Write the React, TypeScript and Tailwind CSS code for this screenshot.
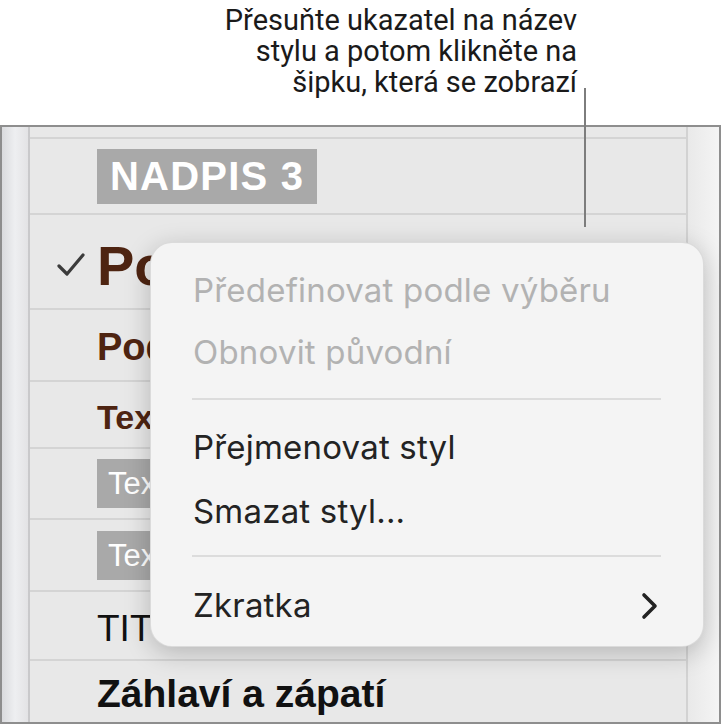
import React from 'react';

type Row = {
  label: string;
  h: string;
  checked?: boolean;
  boxed?: boolean;
  className: string;
};

const ROWS: Row[] = [
  { label: 'NADPIS 3', h: 'h-[76px]', boxed: true, className: 'text-[40px] font-bold text-white tracking-[1.2px] px-[13px] h-[55px]' },
  { label: 'Podnadpis', h: 'h-[95px]', checked: true, className: 'text-[56px] font-bold text-[#4e2411] pt-[8px]' },
  { label: 'Podnadpis 2', h: 'h-[72px]', className: 'text-[38px] font-bold text-[#4e2411] pt-[4px]' },
  { label: 'Text', h: 'h-[67px]', className: 'text-[34px] font-bold text-[#4e2411] pt-[4px]' },
  { label: 'Text s odrážkami', h: 'h-[71px]', boxed: true, className: 'text-[31px] text-white px-[11px] h-[49px]' },
  { label: 'Text s čísly', h: 'h-[72px]', boxed: true, className: 'text-[31px] text-white px-[11px] h-[49px]' },
  { label: 'TITULEK', h: 'h-[69px]', className: 'text-[37px] text-[#111] pt-[6px]' },
];

function Check() {
  return (
    <svg width="28" height="24" viewBox="0 0 28 24" fill="none">
      <path d="M2 13 L10 21 L26 2" stroke="#3b3b3b" strokeWidth="3.2" strokeLinecap="round" strokeLinejoin="round" />
    </svg>
  );
}

function StyleRow({ row }: { row: Row }) {
  return (
    <div className={`${row.h} shrink-0 flex items-center border-b-2 border-[#d4d4d4] pl-[27px] whitespace-nowrap overflow-hidden`}>
      <div className="w-[40px] shrink-0 flex items-center pt-[6px]">{row.checked && <Check />}</div>
      {row.boxed ? (
        <span className={`flex items-center bg-[#a9a9a9] leading-none ${row.className}`}>{row.label}</span>
      ) : (
        <span className={`leading-none ${row.className}`}>{row.label}</span>
      )}
    </div>
  );
}

function MenuItem({ label, disabled, h, submenu }: { label: string; disabled?: boolean; h: string; submenu?: boolean }) {
  return (
    <div className={`${h} flex items-center justify-between pl-[42px] pr-[45px]`}>
      <span className={disabled ? 'text-[#b2b2b2]' : 'text-[#232323]'}>{label}</span>
      {submenu && (
        <svg width="17" height="28" viewBox="0 0 17 28" fill="none">
          <path d="M3 3 L14 14 L3 25" stroke="#222" strokeWidth="3.6" strokeLinecap="round" strokeLinejoin="round" />
        </svg>
      )}
    </div>
  );
}

function Separator({ className }: { className: string }) {
  return <div className={`h-[2px] bg-[#dcdcdc] ml-[41px] mr-[42px] ${className}`} />;
}

export default function App() {
  return (
    <div className="relative w-[721px] h-[726px] bg-white overflow-hidden font-['Liberation_Sans',Arial,sans-serif]">
      {/* callout */}
      <div className="h-[125px] pt-[5px] pr-[144px] text-right text-[29px] leading-[31px] text-[#1a1a1a] font-['Roboto',sans-serif]">
        <p>Přesuňte ukazatel na název</p>
        <p>stylu a potom klikněte na</p>
        <p>šipku, která se zobrazí</p>
      </div>

      {/* styles pane */}
      <div className="h-[599px] border-2 border-[#8e8e8e] flex">
        <div className="w-[28px] shrink-0 border-r-2 border-[#c9c9cb] bg-gradient-to-r from-[#dadbde] via-[#eeeff1] to-[#e3e3e5]" />
        <div className="w-[656px] shrink-0 bg-[#e8e8e8] flex flex-col">
          <div className="h-[12px] shrink-0 border-b-2 border-[#d4d4d4]" />
          {ROWS.map((r) => (
            <StyleRow key={r.label} row={r} />
          ))}
          <div className="flex-1 flex items-center pl-[67px] pt-[4px] whitespace-nowrap">
            <span className="text-[39px] font-bold leading-none text-[#111]">Záhlaví a zápatí</span>
          </div>
        </div>
        <div className="flex-1 border-l-2 border-[#d2d2d2] bg-gradient-to-r from-[#e9e9e9] to-[#f4f4f4]" />
      </div>

      {/* pointer line */}
      <div className="absolute left-[584px] top-[88px] w-[2px] h-[139px] bg-[#7d7d7d]" />

      {/* context menu */}
      <div className="absolute left-[150px] top-[242px] w-[554px] h-[405px] rounded-[22px] bg-[#f4f4f4] border border-black/10 shadow-[0_6px_26px_rgba(0,0,0,0.22)] pt-[17px] text-[33px] tracking-[0.2px] font-['Inter',sans-serif]">
        <MenuItem label="Předefinovat podle výběru" disabled h="h-[62px]" />
        <MenuItem label="Obnovit původní" disabled h="h-[62px]" />
        <Separator className="mt-[14px] mb-[16px]" />
        <MenuItem label="Přejmenovat styl" h="h-[64px]" />
        <MenuItem label="Smazat styl..." h="h-[64px]" />
        <Separator className="mt-[11px] mb-[17px]" />
        <MenuItem label="Zkratka" submenu h="h-[64px]" />
      </div>
    </div>
  );
}
